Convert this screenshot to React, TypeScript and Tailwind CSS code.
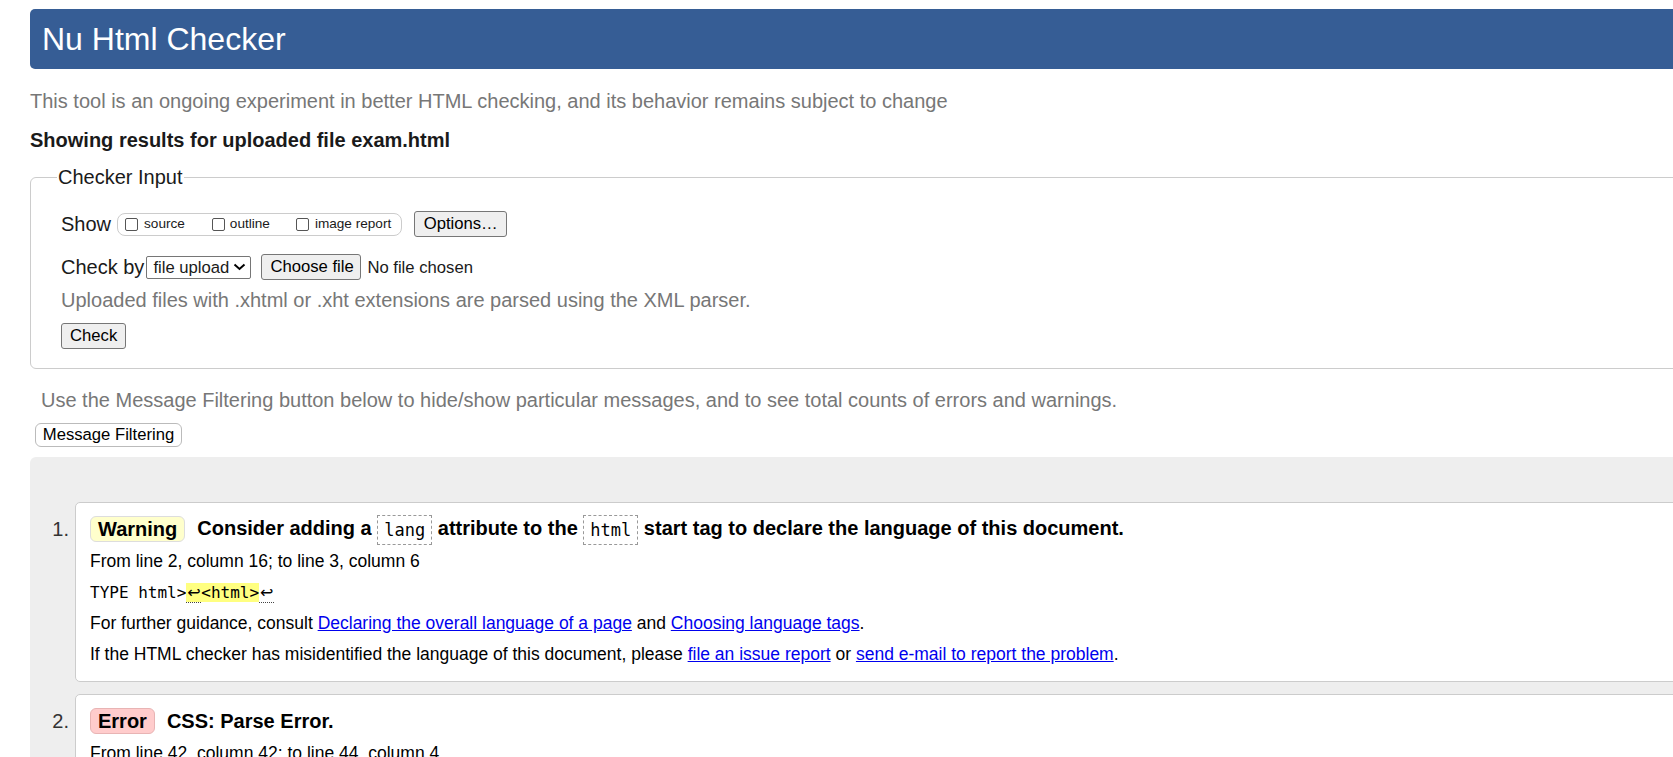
import React from "react";

function Btn({ children, className = "" }: { children: React.ReactNode; className?: string }) {
  return (
    <button
      className={`h-[26px] px-[8px] bg-[#efefef] border border-[#767676] rounded-[3px] text-[16.67px] leading-none text-black whitespace-nowrap ${className}`}
    >
      {children}
    </button>
  );
}

function Box() {
  return <span className="inline-block w-[13px] h-[13px] border border-[#555] rounded-[2px] bg-white" />;
}

function Code({ children }: { children: React.ReactNode }) {
  return (
    <code className="inline-block align-middle h-[30px] leading-[28px] px-[6px] border border-dashed border-[#999] font-['DejaVu_Sans_Mono',monospace] text-[17px] font-normal">
      {children}
    </code>
  );
}

function Link({ children }: { children: React.ReactNode }) {
  return <a className="text-[#0000ee] underline">{children}</a>;
}

function Line({ children }: { children: React.ReactNode }) {
  return <p className="h-[31px] leading-[31px] whitespace-nowrap">{children}</p>;
}

function Lf() {
  return (
    <span className="inline-block w-[15px] text-center border-b border-dotted border-[#444] leading-[18px] text-[16px] font-['DejaVu_Sans',sans-serif]">
      ↩
    </span>
  );
}

export default function App() {
  return (
    <div className="w-full h-screen overflow-hidden bg-white text-[#1a1a1a] font-['Liberation_Sans',Arial,sans-serif]">
      <div className="w-[1720px] pl-[30px] pt-[9px]">
        <header className="h-[60px] bg-[#365d95] rounded-[5px] flex items-center pl-[12px]">
          <h1 className="text-white text-[32px] leading-none font-normal">Nu Html Checker</h1>
        </header>

        <p className="mt-[21px] text-[20px] leading-[23px] text-[#777]">
          This tool is an ongoing experiment in better HTML checking, and its behavior remains subject to change
        </p>
        <p className="mt-[16px] text-[20px] leading-[23px] font-bold">Showing results for uploaded file exam.html</p>

        <fieldset className="mt-[14px] border border-[#ccc] rounded-[6px] pl-[30px] pt-[22px] pb-[19px]">
          <legend className="-ml-[4px] px-[1px] text-[20px] leading-[23px]">Checker Input</legend>

          <div className="flex items-center h-[26px]">
            <span className="text-[20px]">Show</span>
            <div className="ml-[6px] h-[23px] flex items-center border border-[#ccc] rounded-[8px] pl-[7px] pr-[10px] text-[13.6px]">
              <Box />
              <span className="ml-[6px]">source</span>
              <span className="ml-[27px] flex items-center">
                <Box />
              </span>
              <span className="ml-[5px]">outline</span>
              <span className="ml-[26px] flex items-center">
                <Box />
              </span>
              <span className="ml-[6px]">image report</span>
            </div>
            <Btn className="ml-[12px] w-[93px]">Options…</Btn>
          </div>

          <div className="mt-[17px] flex items-center h-[26px]">
            <span className="text-[20px]">Check by</span>
            <div className="ml-[2px] h-[23px] w-[105px] flex items-center border border-[#767676] rounded-[2px] pl-[6px] text-[16.67px]">
              <span>file upload</span>
              <svg className="ml-[4px]" width="13" height="8" viewBox="0 0 13 8">
                <path d="M1.5 1.5 6.5 6l5-4.5" fill="none" stroke="#000" strokeWidth="2" />
              </svg>
            </div>
            <Btn className="ml-[10px] w-[100px] px-0">Choose file</Btn>
            <span className="ml-[6px] text-[16.67px]">No file chosen</span>
          </div>

          <p className="mt-[9px] text-[20px] leading-[23px] text-[#777]">
            Uploaded files with .xhtml or .xht extensions are parsed using the XML parser.
          </p>

          <Btn className="mt-[11px] w-[65px]">Check</Btn>
        </fieldset>

        <p className="mt-[20px] ml-[11px] text-[20px] leading-[23px] text-[#777]">
          Use the Message Filtering button below to hide/show particular messages, and to see total counts of errors and warnings.
        </p>
        <button className="mt-[11px] ml-[5px] h-[24px] w-[147px] bg-white border border-[#bbb] rounded-[6px] text-[16.67px] leading-none text-black">
          Message Filtering
        </button>

        <div className="mt-[10px] bg-[#eee] rounded-tl-[6px] pt-[45px] h-[400px]">
          <ol className="flex flex-col gap-[12px]">
            <li className="flex">
              <div className="w-[45px] pr-[6px] text-right pt-[14px] text-[20px] leading-[26px] text-[#333]">1.</div>
              <div className="flex-1 bg-white border border-[#ccc] rounded-[5px] pt-[13px] pb-[11px] pl-[14px] text-black">
                <div className="flex items-center h-[26px] gap-[12px]">
                  <span className="h-[26px] px-[7px] flex items-center bg-[#ffffcc] border border-[#ddd] rounded-[6px] font-bold text-[20px]">
                    Warning
                  </span>
                  <span className="text-[20px] font-bold leading-[30px] whitespace-nowrap">
                    Consider adding a <Code>lang</Code> attribute to the <Code>html</Code> start tag to declare the language of this document.
                  </span>
                </div>
                <div className="mt-[4px] text-[17.5px]">
                  <Line>From line 2, column 16; to line 3, column 6</Line>
                  <Line>
                    <code className="font-['DejaVu_Sans_Mono',monospace] text-[16px]">
                      TYPE html&gt;
                      <span className="bg-[#ffff80]">
                        <Lf />
                        &lt;html&gt;
                      </span>
                      <Lf />
                    </code>
                  </Line>
                  <Line>
                    For further guidance, consult <Link>Declaring the overall language of a page</Link> and{" "}
                    <Link>Choosing language tags</Link>.
                  </Line>
                  <Line>
                    If the HTML checker has misidentified the language of this document, please{" "}
                    <Link>file an issue report</Link> or <Link>send e-mail to report the problem</Link>.
                  </Line>
                </div>
              </div>
            </li>
            <li className="flex">
              <div className="w-[45px] pr-[6px] text-right pt-[14px] text-[20px] leading-[26px] text-[#333]">2.</div>
              <div className="flex-1 bg-white border border-[#ccc] rounded-[5px] pt-[13px] pb-[11px] pl-[14px] text-black">
                <div className="flex items-center h-[26px] gap-[12px]">
                  <span className="h-[26px] px-[7px] flex items-center bg-[#ffcccc] border border-[#e8b4b4] rounded-[6px] font-bold text-[20px]">
                    Error
                  </span>
                  <span className="text-[20px] font-bold leading-[30px]">CSS: Parse Error.</span>
                </div>
                <div className="mt-[4px] text-[17.5px]">
                  <Line>From line 42, column 42; to line 44, column 4</Line>
                  <Line>&nbsp;</Line>
                </div>
              </div>
            </li>
          </ol>
        </div>
      </div>
    </div>
  );
}
